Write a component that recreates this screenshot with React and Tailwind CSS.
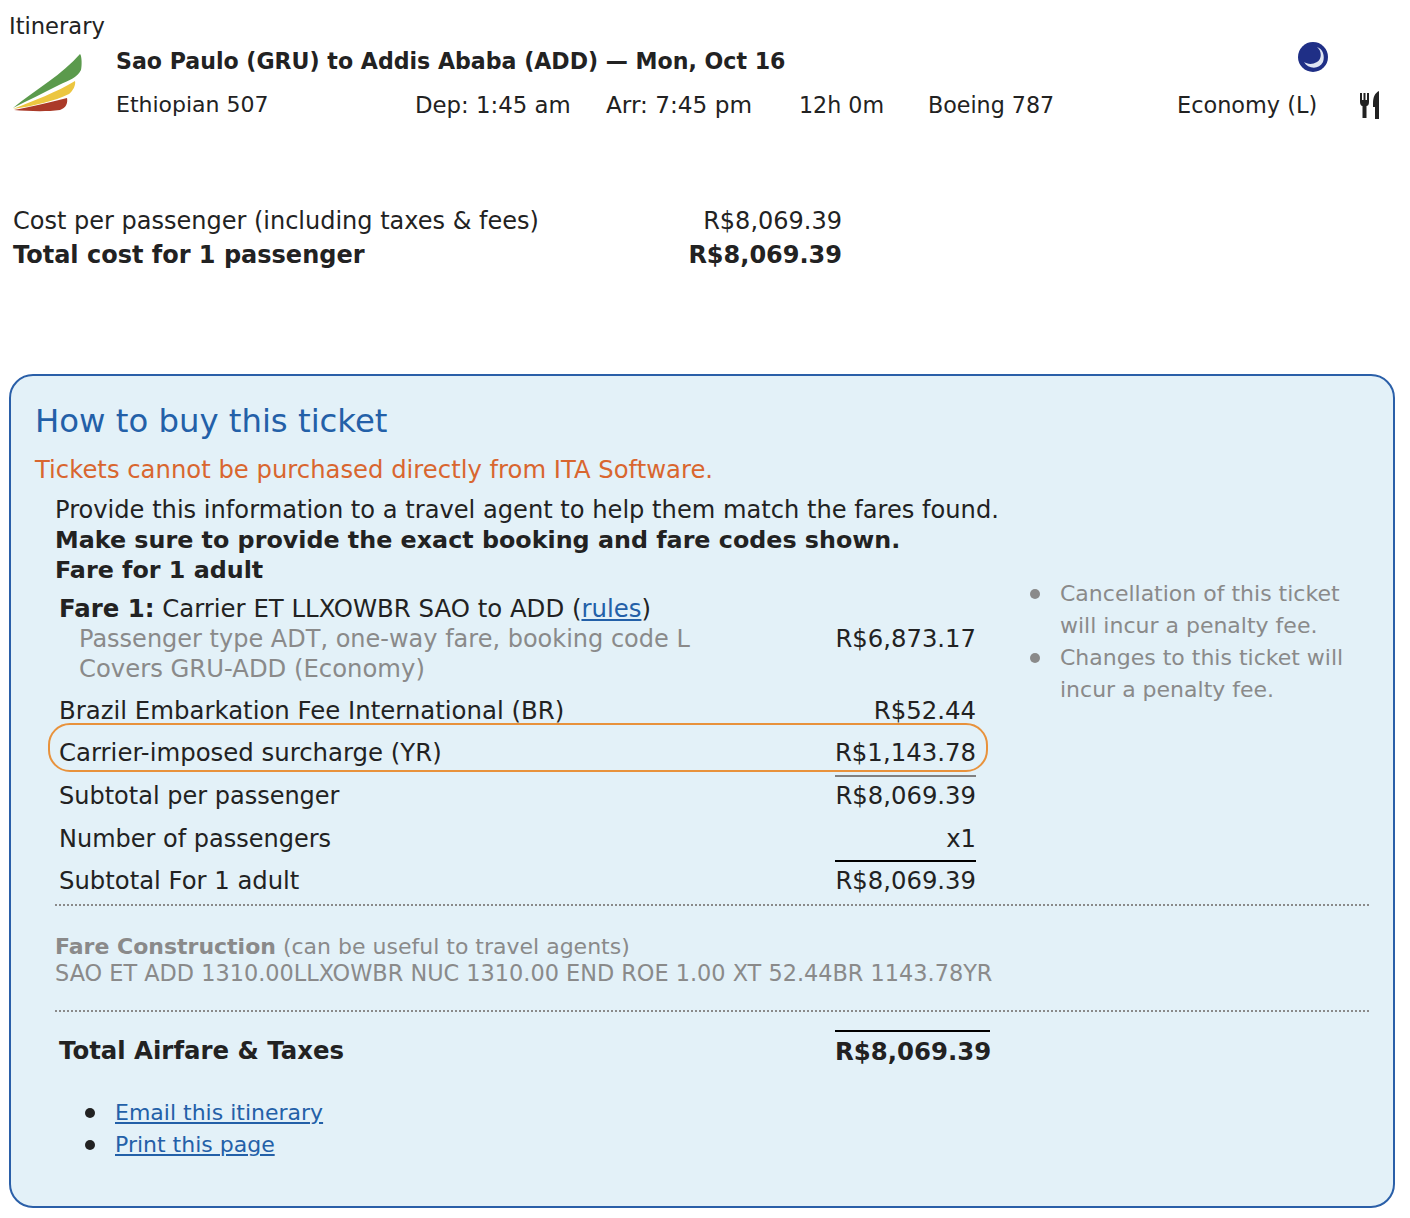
const Logo = () => (
  <svg width="72" height="64" viewBox="0 0 72 64" className="shrink-0">
    <path d="M2 56 C24 38 52 22 69 2 C71 4 71 14 70 18 C66 26 58 28 48 33 C32 41 16 49 2 56Z" fill="#5b9a4c" />
    <path d="M2 57 C22 49 46 40 64 29 C65 33 62 39 58 42 C44 49 22 54 2 57Z" fill="#ecc640" />
    <path d="M3 58 C24 54 40 50 56 46 C57 51 55 56 49 58 C34 60 16 59 3 58Z" fill="#ab3a28" />
  </svg>
);

const Moon = () => (
  <svg width="32" height="32" viewBox="0 0 32 32">
    <circle cx="16" cy="16" r="15" fill="#1f2f86" />
    <path d="M20 6 C25 10 25 18 20 21 C15 24 10 23 7 21 C11 28 22 29 26 21 C28 15 26 8 20 6Z" fill="#dfe5f3" />
  </svg>
);

const Fork = () => (
  <svg width="22" height="30" viewBox="0 0 22 30">
    <path d="M1 3 H3 V10 H4.5 V3 H6.5 V10 H8 V3 H10 V12 C10 15 8.5 16 7.5 16 V28 H3.5 V16 C2 16 1 14 1 12Z" fill="#222" />
    <path d="M14 13 C14 7 16 3 20 1 V29 H16 V17 H14Z" fill="#222" />
  </svg>
);

const Row = ({ label, value, className = "" }) => (
  <div className={`flex justify-between ${className}`}>
    <span>{label}</span>
    <span>{value}</span>
  </div>
);

const Item = ({ dot, children }) => (
  <li className="flex items-start">
    <span className={`w-[10px] h-[10px] mt-[11px] rounded-full shrink-0 ${dot}`} />
    {children}
  </li>
);

export default function App() {
  return (
    <div className="w-[1410px] h-[1218px] bg-white text-[#222222] font-['DejaVu_Sans','Liberation_Sans',sans-serif] text-[24px] leading-[30px] overflow-hidden">
      <div className="pl-[9px] pt-[13px] leading-[26px] text-[22.6px]">Itinerary</div>
      <div className="flex pl-[11px]">
        <div className="w-[105px] pt-[13px]"><Logo /></div>
        <div className="w-[1270px]">
          <div className="flex justify-between h-[44px] items-center pr-[57px]">
            <span className="font-bold text-[22.1px]">Sao Paulo (GRU) to Addis Ababa (ADD) — Mon, Oct 16</span>
            <span className="-mt-[8px]"><Moon /></span>
          </div>
          <div className="flex h-[44px] items-center">
            <span className="w-[299px] text-[22px]">Ethiopian 507</span>
            <span className="w-[191px] text-[22.8px]">Dep: 1:45 am</span>
            <span className="w-[193px] text-[23.2px]">Arr: 7:45 pm</span>
            <span className="w-[129px] text-[22.2px]">12h 0m</span>
            <span className="w-[249px] text-[22.2px]">Boeing 787</span>
            <span className="w-[182px] text-[22.4px]">Economy (L)</span>
            <Fork />
          </div>
        </div>
      </div>

      <div className="w-[829px] ml-[13px] mt-[77px] leading-[34px]">
        <Row label="Cost per passenger (including taxes & fees)" value="R$8,069.39" />
        <Row className="font-bold" label="Total cost for 1 passenger" value="R$8,069.39" />
      </div>

      <div className="ml-[9px] mt-[102px] w-[1386px] h-[834px] border-2 border-[#2a5fa8] rounded-[24px] bg-[#e3f1f8] pl-[24px] pr-[24px] pt-[25px]">
        <div className="text-[32.3px] leading-[40px] text-[#2360a8]">How to buy this ticket</div>
        <div className="mt-[14px] text-[24.3px] text-[#d9662f]">Tickets cannot be purchased directly from ITA Software.</div>
        <div className="mt-[10px] pl-[20px]">
          <div className="text-[24.15px]">Provide this information to a travel agent to help them match the fares found.</div>
          <div className="font-bold text-[23.8px]">Make sure to provide the exact booking and fare codes shown.</div>
          <div className="font-bold text-[23.8px]">Fare for 1 adult</div>
        </div>

        <div className="flex pl-[24px]">
          <div className="w-[917px] text-[24.3px]">
            <div className="pt-[9px]">
              <div className="text-[24.4px]"><span className="font-bold">Fare 1:</span> Carrier ET LLXOWBR SAO to ADD (<a className="text-[#2360a8] underline">rules</a>)</div>
              <div className="flex justify-between">
                <div className="pl-[20px] text-[#8a8a8a]">
                  <div className="text-[24px]">Passenger type ADT, one-way fare, booking code L</div>
                  <div>Covers GRU-ADD (Economy)</div>
                </div>
                <span>R$6,873.17</span>
              </div>
            </div>
            <Row className="mt-[12px] text-[24.4px]" label="Brazil Embarkation Fee International (BR)" value="R$52.44" />
            <div className="relative mt-[12px]">
              <div className="absolute -left-[11px] -right-[12px] -top-[15px] h-[49px] border-2 border-[#e8923c] rounded-[22px]" />
              <Row className="text-[24.4px]" label="Carrier-imposed surcharge (YR)" value="R$1,143.78" />
            </div>
            <div className="flex justify-between mt-[7px]">
              <span className="pt-[6px] text-[24px]">Subtotal per passenger</span>
              <span className="w-[141px] text-right border-t-2 border-[#808080] pt-[4px]">R$8,069.39</span>
            </div>
            <div className="flex justify-between mt-[13px]">
              <span className="text-[24px]">Number of passengers</span>
              <span>x1</span>
            </div>
            <div className="flex justify-between mt-[6px]">
              <span className="pt-[6px]">Subtotal For 1 adult</span>
              <span className="w-[141px] text-right border-t-2 border-black pt-[4px]">R$8,069.39</span>
            </div>
          </div>
          <ul className="w-[320px] ml-[54px] -mt-[7px] text-[#8a8a8a] text-[22px] leading-[32px]">
            <Item dot="bg-[#8a8a8a]"><span className="pl-[20px]">Cancellation of this ticket will incur a penalty fee.</span></Item>
            <Item dot="bg-[#8a8a8a]"><span className="pl-[20px]">Changes to this ticket will incur a penalty fee.</span></Item>
          </ul>
        </div>

        <div className="ml-[20px] mt-[8px] border-t-2 border-dotted border-[#8a8a8a]" />
        <div className="ml-[20px] mt-[28px] text-[#8a8a8a] text-[22px] leading-[26px]">
          <div><span className="font-bold">Fare Construction</span> (can be useful to travel agents)</div>
          <div className="text-[22.4px]">SAO ET ADD 1310.00LLXOWBR NUC 1310.00 END ROE 1.00 XT 52.44BR 1143.78YR</div>
        </div>
        <div className="ml-[20px] mt-[24px] border-t-2 border-dotted border-[#8a8a8a]" />

        <div className="flex justify-between w-[955px] pl-[24px] mt-[18px] font-bold text-[24.4px]">
          <span className="pt-[6px]">Total Airfare &amp; Taxes</span>
          <span className="w-[155px] border-t-2 border-black pt-[5px]">R$8,069.39</span>
        </div>

        <ul className="pl-[50px] mt-[30px] text-[22px] leading-[32px] text-[#2360a8]">
          <Item dot="bg-[#222222]"><a className="pl-[20px] underline">Email this itinerary</a></Item>
          <Item dot="bg-[#222222]"><a className="pl-[20px] underline">Print this page</a></Item>
        </ul>
      </div>
    </div>
  );
}
